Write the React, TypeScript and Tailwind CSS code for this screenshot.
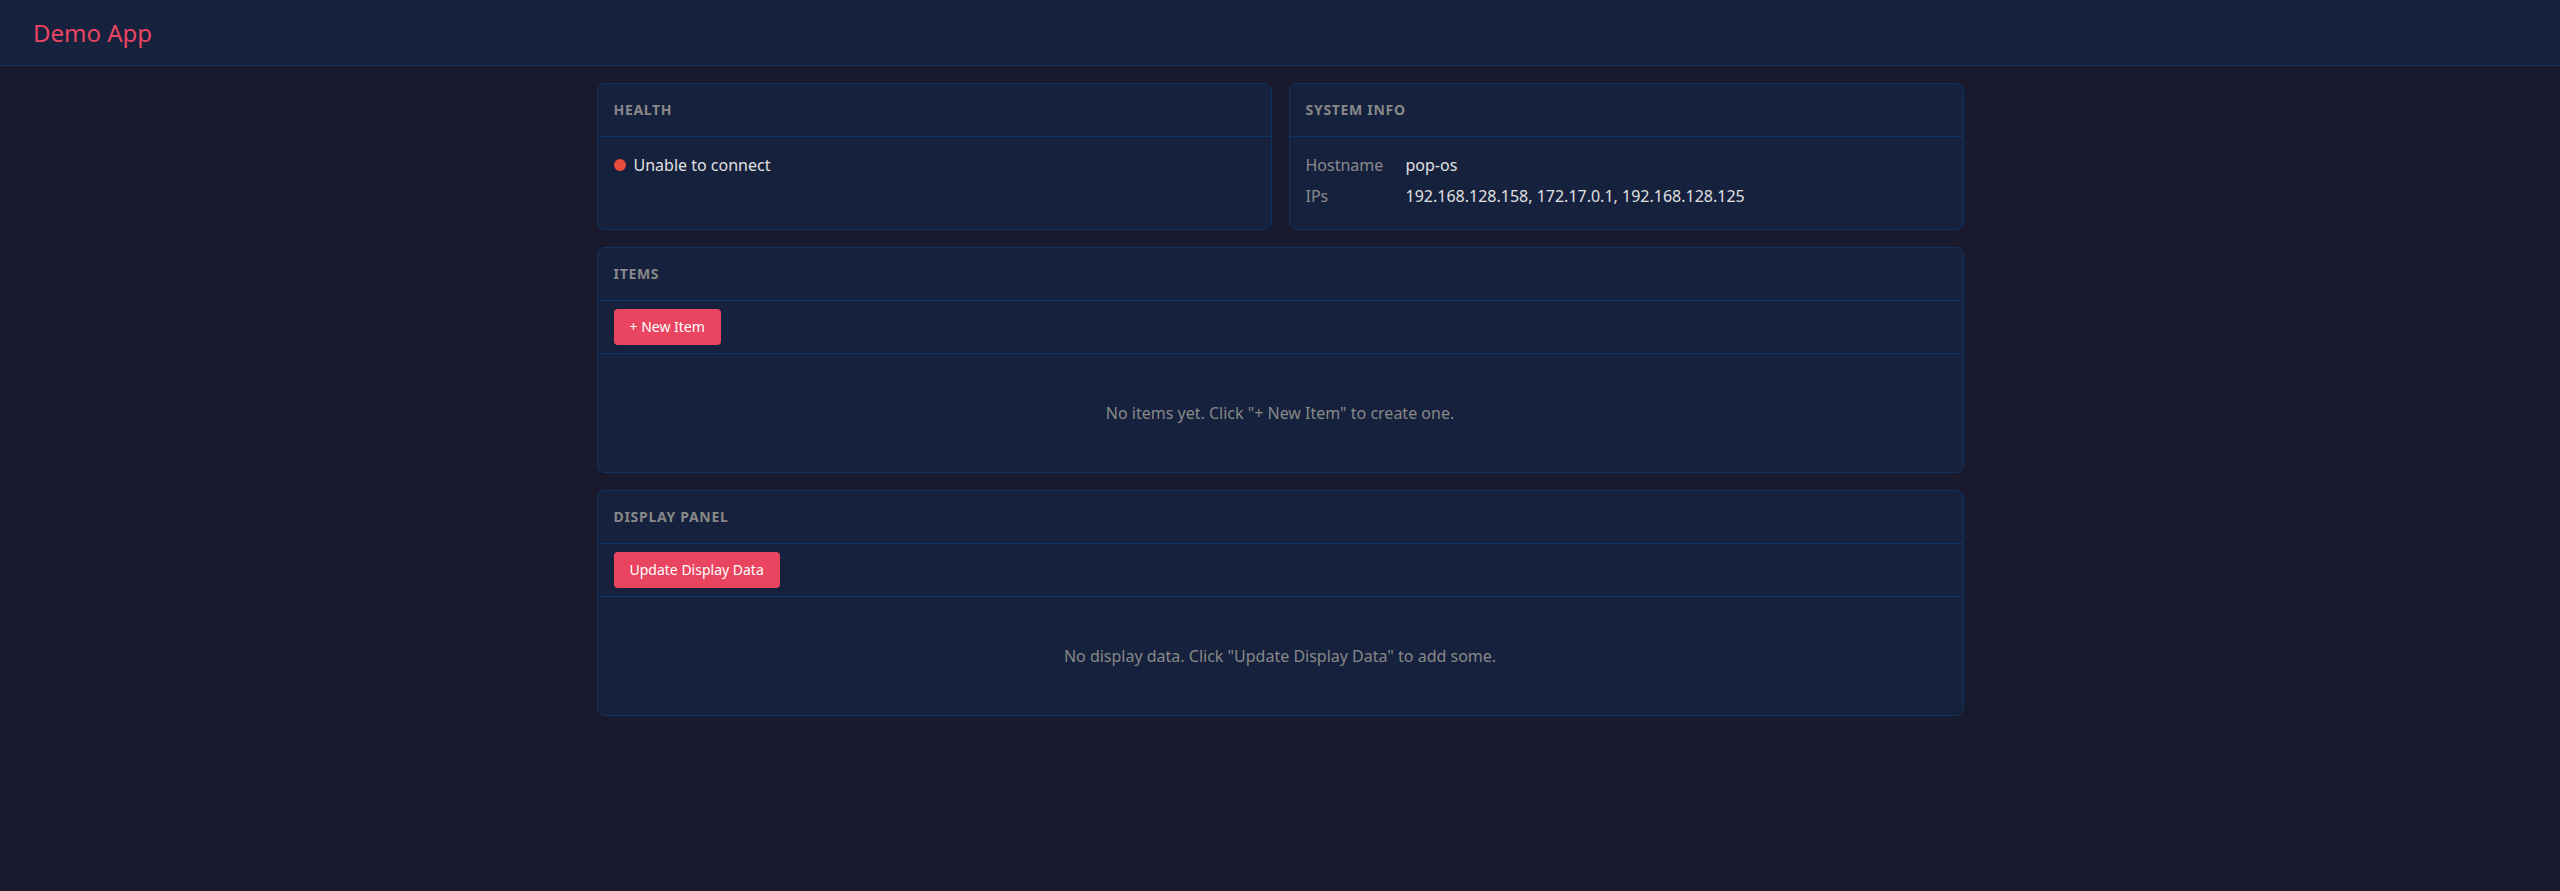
import React from "react";

const font = { fontFamily: '"Noto Sans", "Open Sans", sans-serif' };

function CardHeader({ title }: { title: string }) {
  return (
    <div className="border-b border-[#0f3460] px-4 py-4">
      <h2 className="text-[14px] font-bold uppercase leading-5 tracking-[0.05em] text-[#888888]">
        {title}
      </h2>
    </div>
  );
}

export default function App() {
  return (
    <div className="min-h-[891px] bg-[#1a1a2e] text-[#e0e0e0]" style={font}>
      <header className="flex h-[66px] items-center border-b border-[#0f3460] bg-[#16213e] px-[33px]">
        <h1 className="text-[24px] font-normal leading-8 text-[#e94560]">Demo App</h1>
      </header>

      <main className="mx-auto flex w-[1367px] flex-col gap-[17px] pt-[17px]">
        <div className="grid grid-cols-2 gap-[17px]">
          <section className="flex flex-col rounded-lg border border-[#0f3460] bg-[#16213e]">
            <CardHeader title="Health" />
            <div className="flex-1 p-4">
              <div className="flex items-center gap-2 text-[16px] leading-6">
                <span className="h-3 w-3 rounded-full bg-[#e74c3c]" />
                <span className="text-[#e0e0e0]">Unable to connect</span>
              </div>
            </div>
          </section>

          <section className="flex flex-col rounded-lg border border-[#0f3460] bg-[#16213e]">
            <CardHeader title="System Info" />
            <div className="flex flex-col gap-[7px] px-4 pb-[21px] pt-4 text-[16px] leading-6">
              <div className="flex">
                <span className="w-[100px] text-[#8a8a8a]">Hostname</span>
                <span className="text-[#e0e0e0]">pop-os</span>
              </div>
              <div className="flex">
                <span className="w-[100px] text-[#8a8a8a]">IPs</span>
                <span className="text-[#e0e0e0]">192.168.128.158, 172.17.0.1, 192.168.128.125</span>
              </div>
            </div>
          </section>
        </div>

        <section className="rounded-lg border border-[#0f3460] bg-[#16213e]">
          <CardHeader title="Items" />
          <div className="border-b border-[#0f3460] px-4 py-2">
            <button className="h-9 rounded bg-[#e94560] px-4 text-[14px] leading-5 text-white">
              + New Item
            </button>
          </div>
          <div className="py-[47px] text-center text-[16px] leading-6 text-[#888888]">
            No items yet. Click "+ New Item" to create one.
          </div>
        </section>

        <section className="rounded-lg border border-[#0f3460] bg-[#16213e]">
          <CardHeader title="Display Panel" />
          <div className="border-b border-[#0f3460] px-4 py-2">
            <button className="h-9 rounded bg-[#e94560] px-4 text-[14px] leading-5 text-white">
              Update Display Data
            </button>
          </div>
          <div className="py-[47px] text-center text-[16px] leading-6 text-[#888888]">
            No display data. Click "Update Display Data" to add some.
          </div>
        </section>
      </main>
    </div>
  );
}
